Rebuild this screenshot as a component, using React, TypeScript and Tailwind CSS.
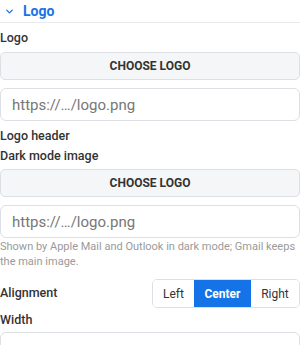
import { ChevronDown } from 'lucide-react';

const font = { fontFamily: 'Roboto, "Noto Sans", sans-serif' };

function ChooseButton() {
  return (
    <button className="w-full h-[28px] rounded-[5px] border border-[#dcdfe4] bg-[#f5f6f8] text-[12px] font-bold text-[#333]">
      CHOOSE LOGO
    </button>
  );
}

function UrlInput() {
  return (
    <input
      className="w-full h-[33px] rounded-[6px] border border-[#dcdfe4] bg-white px-[11px] text-[15px] text-[#333] placeholder:text-[#777] outline-none"
      placeholder="https://…/logo.png"
    />
  );
}

export default function App() {
  const aligns = [
    { name: 'Left', w: 'w-[41px]' },
    { name: 'Center', w: 'w-[57px]' },
    { name: 'Right', w: 'w-[48px]' },
  ];
  return (
    <div className="w-[300px] h-[345px] overflow-hidden bg-white" style={font}>
      <div className="h-[22px] flex items-center gap-[8px] pl-[4px] border-b border-[#e8eaed] box-content">
        <ChevronDown size={11} strokeWidth={3} className="text-[#1a73e8]" />
        <span className="text-[14px] font-bold text-[#1a73e8]">Logo</span>
      </div>

      <div className="text-[12.5px] leading-[16px] font-medium text-[#333] mt-[7px]">Logo</div>
      <div className="mt-[6px]">
        <ChooseButton />
      </div>
      <div className="mt-2">
        <UrlInput />
      </div>

      <div className="text-[12.5px] leading-[16px] font-medium text-[#333] mt-[7px]">Logo header</div>
      <div className="text-[12.5px] leading-[16px] font-medium text-[#333] mt-[4px]">Dark mode image</div>
      <div className="mt-[5px]">
        <ChooseButton />
      </div>
      <div className="mt-2">
        <UrlInput />
      </div>
      <p className="mt-[1px] text-[11px] leading-[15px] text-[#9a9a9a]">
        Shown by Apple Mail and Outlook in dark mode; Gmail keeps the main image.
      </p>

      <div className="mt-[10px] flex items-center justify-between">
        <span className="text-[12.5px] font-medium text-[#333]">Alignment</span>
        <div className="flex h-[29px] rounded-[5px] border border-[#dcdfe4] overflow-hidden">
          {aligns.map((a) => (
            <button
              key={a.name}
              className={
                a.name === 'Center'
                  ? `${a.w} text-[12px] font-bold text-white bg-[#1473e6]`
                  : `${a.w} text-[12px] text-[#333] bg-white`
              }
            >
              {a.name}
            </button>
          ))}
        </div>
      </div>

      <div className="text-[12.5px] leading-[16px] font-medium text-[#333] mt-[4px]">Width</div>
      <div className="mt-[4px]">
        <div className="w-full h-[33px] rounded-[6px] border border-[#dcdfe4]" />
      </div>
    </div>
  );
}
